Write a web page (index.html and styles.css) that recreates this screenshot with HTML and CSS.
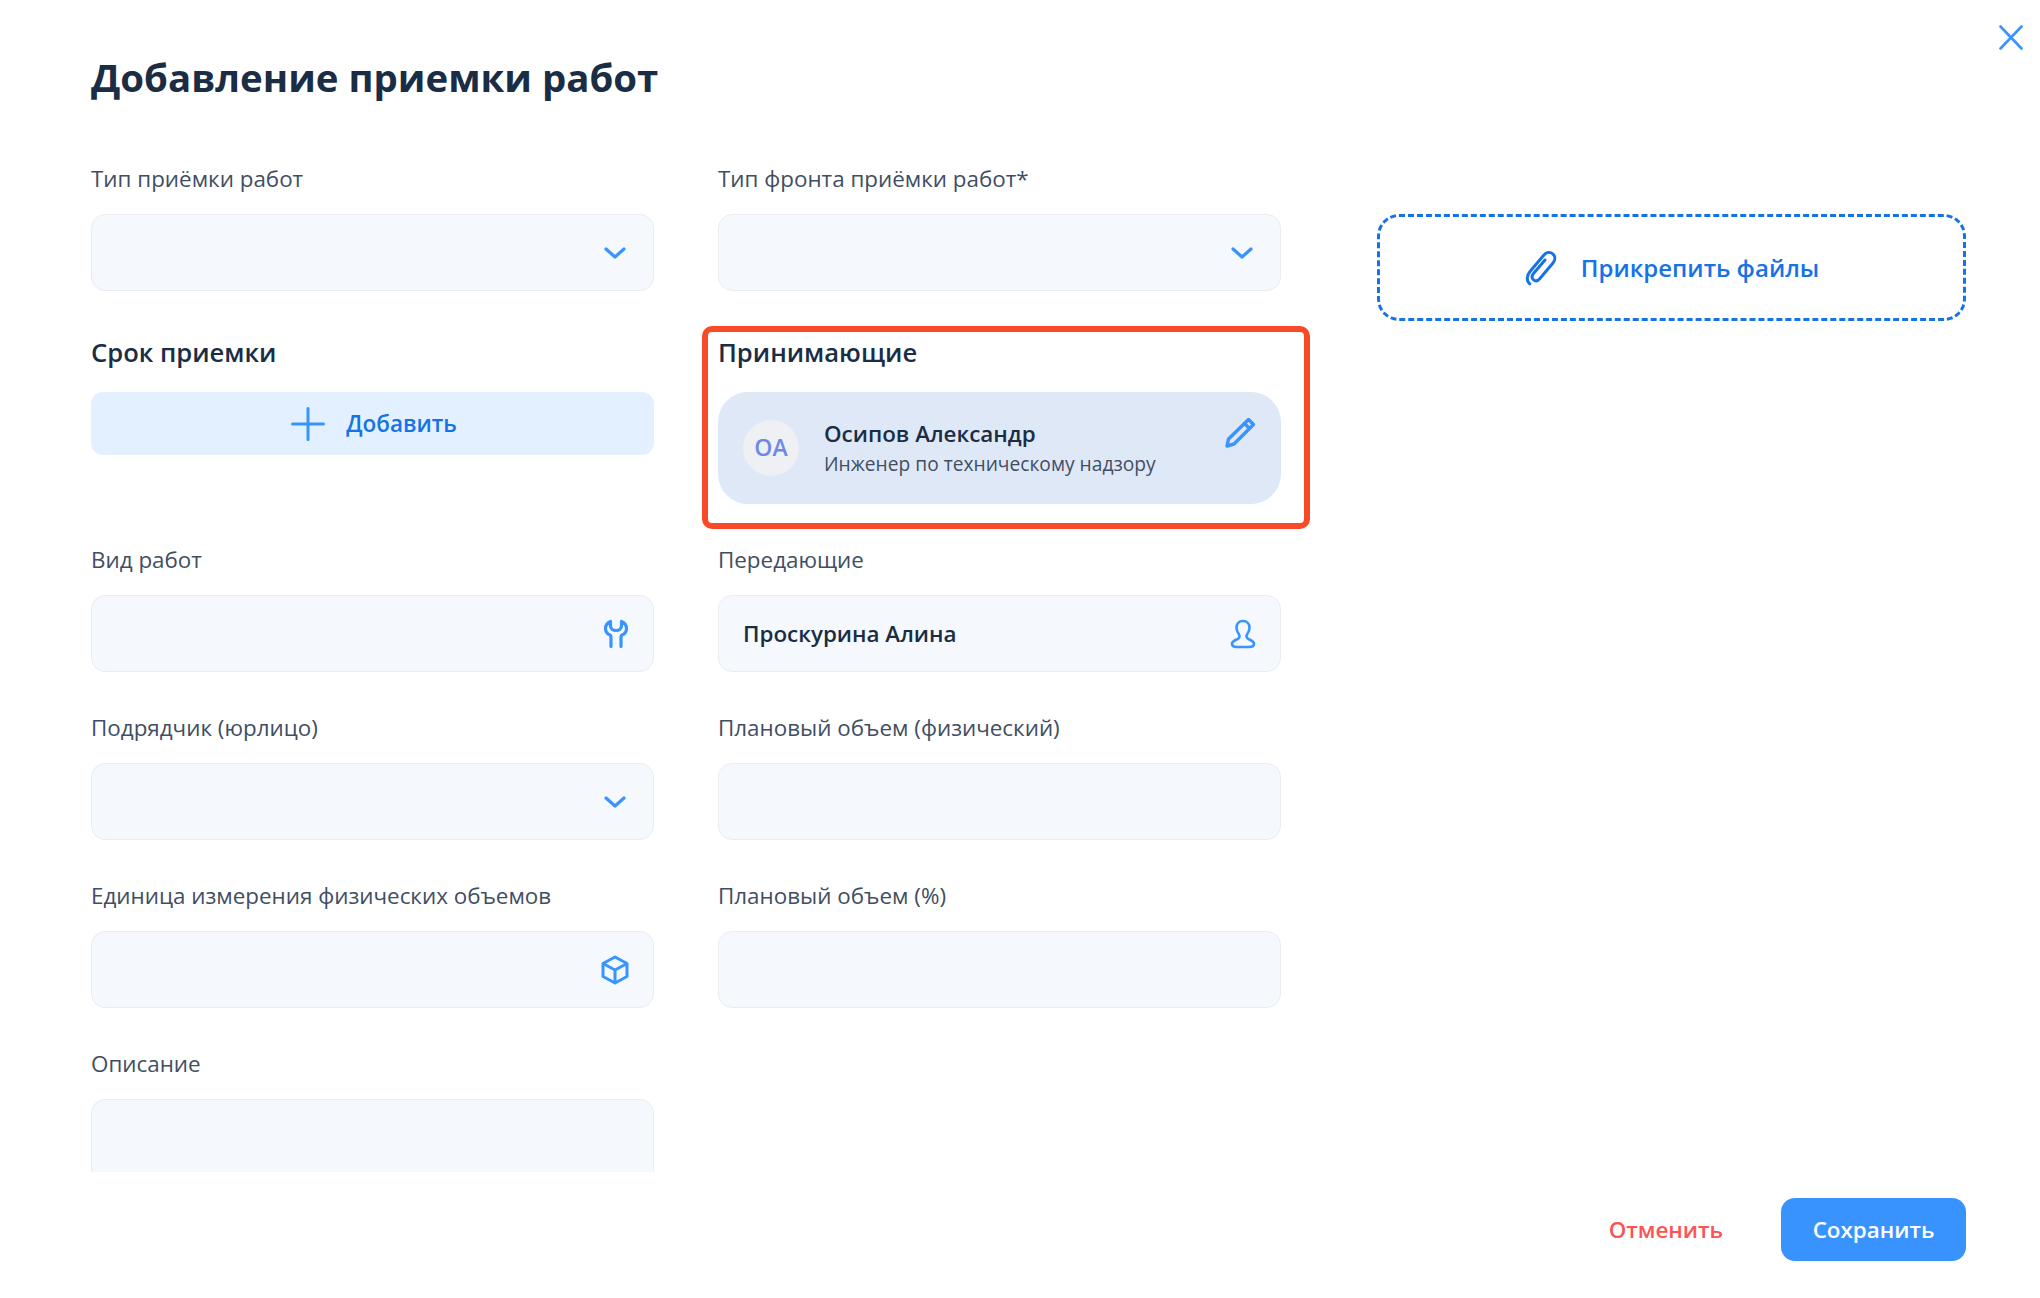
FILE: index.html
```html
<!DOCTYPE html>
<html lang="ru">
<head>
    <meta charset="UTF-8">
    <title>Добавление приемки работ</title>
    <link rel="stylesheet" href="styles.css">
</head>
<body>
    <div class="modal">
        <button class="close-btn" aria-label="Закрыть">
            <svg width="24" height="25" viewBox="0 0 24 25"><path d="M1.5 1.5 22.5 23.5M22.5 1.5 1.5 23.5" fill="none" stroke="#3894ff" stroke-width="2.6" stroke-linecap="round"/></svg>
        </button>

        <h1 class="modal-title">Добавление приемки работ</h1>

        <div class="form-scroll">
            <form class="form-grid">
                <div class="field-group">
                    <label class="field-label">Тип приёмки работ</label>
                    <div class="field">
                        <svg class="field-icon field-icon--chevron" width="22" height="12" viewBox="0 0 22 12"><path d="M2 2 11 10 20 2" class="icon-line"/></svg>
                    </div>
                </div>
                <div class="field-group">
                    <label class="field-label">Тип фронта приёмки работ*</label>
                    <div class="field">
                        <svg class="field-icon field-icon--chevron" width="22" height="12" viewBox="0 0 22 12"><path d="M2 2 11 10 20 2" class="icon-line"/></svg>
                    </div>
                </div>
                <div class="attach-col">
                    <a href="#" class="attach-btn">
                        <svg width="34" height="38" viewBox="0 0 34 38"><path d="M21 11 9.500 24.500c-2 2.500-1.600 5 .1 6.400 1.800 1.400 4.200 1 6.100-1.200L29 14c2.600-3.200 2.300-7-.3-9.200-2.700-2.200-6.300-1.700-9 1.400L6 22.500c-3.800 4.500-3.500 9.500-.2 12.300" fill="none" stroke="#1673e6" stroke-width="3" stroke-linecap="round"/></svg>
                        Прикрепить файлы
                    </a>
                </div>

                <div class="field-group">
                    <h2 class="section-label">Срок приемки</h2>
                    <a href="#" class="add-btn">
                        <svg width="34" height="34" viewBox="0 0 34 34"><path d="M17 1.500v31M1.500 17h31" fill="none" stroke="#3894ff" stroke-width="3" stroke-linecap="round"/></svg>
                        Добавить
                    </a>
                </div>
                <div class="field-group receivers">
                    <h2 class="section-label">Принимающие</h2>
                    <div class="person-card">
                        <div class="avatar">ОА</div>
                        <div class="person-info">
                            <div class="person-name">Осипов Александр</div>
                            <div class="person-role">Инженер по техническому надзору</div>
                        </div>
                        <svg class="person-edit" width="32" height="32" viewBox="0 0 32 32"><path d="M24.500 2.500 29.500 7.500 10 27 3 29 4.500 22ZM20.500 6.500 25.500 11.500" fill="none" stroke="#3894ff" stroke-width="3.400" stroke-linejoin="round"/></svg>
                    </div>
                    <div class="highlight"></div>
                </div>
                <div class="spacer"></div>

                <div class="field-group">
                    <label class="field-label">Вид работ</label>
                    <div class="field">
                        <svg class="field-icon" width="26" height="30" viewBox="0 0 26 30"><path d="M7.500 2.500C4.200 4 2.500 6.500 2.500 9.500c0 3 2 5.500 4.500 6.500.8.400 1 1 1 2v9.500M18.500 2.500c3.300 1.500 5 4 5 7s-2 5.500-4.500 6.500c-.8.400-1 1-1 2v9.500M7.500 2.500V7c0 2.500 2.500 4.500 5.500 4.500s5.500-2 5.500-4.500V2.500" class="icon-line"/></svg>
                    </div>
                </div>
                <div class="field-group">
                    <label class="field-label">Передающие</label>
                    <div class="field">
                        <span class="field-value">Проскурина Алина</span>
                        <svg class="field-icon" width="26" height="30" viewBox="0 0 26 30"><path d="M13 2c-4 0-6.500 3-6.500 6.800 0 3 1.300 5 2.500 6.700 1 1.500.6 3.200-1.200 4.300-2.500 1.500-5.800 2.400-5.800 5 0 2.200 2 3.200 5 3.200h12c3 0 5-1 5-3.200 0-2.600-3.300-3.500-5.800-5-1.800-1.100-2.200-2.800-1.200-4.300 1.200-1.700 2.500-3.700 2.500-6.700C19.500 5 17 2 13 2Z" fill="none" stroke="#3894ff" stroke-width="2.600"/></svg>
                    </div>
                </div>
                <div class="spacer"></div>

                <div class="field-group">
                    <label class="field-label">Подрядчик (юрлицо)</label>
                    <div class="field">
                        <svg class="field-icon field-icon--chevron" width="22" height="12" viewBox="0 0 22 12"><path d="M2 2 11 10 20 2" class="icon-line"/></svg>
                    </div>
                </div>
                <div class="field-group">
                    <label class="field-label">Плановый объем (физический)</label>
                    <div class="field"></div>
                </div>
                <div class="spacer"></div>

                <div class="field-group">
                    <label class="field-label">Единица измерения физических объемов</label>
                    <div class="field">
                        <svg class="field-icon field-icon--box" width="30" height="30" viewBox="0 0 30 30"><path d="M15 2 27 8.500V21.500L15 28 3 21.500V8.500ZM3 8.500 15 15 27 8.500M15 15V28" fill="none" stroke="#3894ff" stroke-width="3" stroke-linejoin="round"/></svg>
                    </div>
                </div>
                <div class="field-group">
                    <label class="field-label">Плановый объем (%)</label>
                    <div class="field"></div>
                </div>
                <div class="spacer"></div>

                <div class="field-group">
                    <label class="field-label">Описание</label>
                    <div class="field field--area"></div>
                </div>
            </form>
        </div>

        <footer class="modal-footer">
            <a href="#" class="cancel-btn">Отменить</a>
            <a href="#" class="save-btn">Сохранить</a>
        </footer>
    </div>
</body>
</html>
```

FILE: styles.css
```css
:root {
    --blue: #3894ff;
    --blue-dark: #1673e6;
    --text-dark: #1a2d45;
    --text-label: #3f4e63;
    --field-bg: #f5f9fd;
    --field-border: #e9edf1;
}

* {
    margin: 0;
    padding: 0;
    box-sizing: border-box;
}

html, body {
    height: 100%;
}

body {
    font-family: "Open Sans", "Noto Sans", sans-serif;
    background-color: #fff;
    color: var(--text-dark);
    overflow: hidden;
}

a {
    text-decoration: none;
}

.modal {
    position: relative;
    height: 1298px;
    padding: 47px 74px 0 91px;
    display: flex;
    flex-direction: column;
}

.close-btn {
    position: absolute;
    top: 25px;
    right: 17px;
    display: flex;
    border: 0;
    background: none;
}

.modal-title {
    font-size: 38.4px;
    font-weight: 700;
    line-height: 60px;
    margin-bottom: 56px;
}

/* форма */
.form-scroll {
    height: 1009px;
    flex-shrink: 0;
    overflow: hidden;
}

.form-grid {
    display: grid;
    grid-template-columns: 563px 563px 621px;
    column-gap: 64px;
    align-items: start;
}

.attach-col {
    padding: 51px 0 0 32px;
}

.field-group {
    position: relative;
    display: flex;
    flex-direction: column;
    padding-bottom: 40px;
}

.field-label {
    font-size: 22.4px;
    line-height: 32px;
    color: var(--text-label);
    margin-bottom: 19px;
}

.section-label {
    font-size: 25.6px;
    font-weight: 600;
    line-height: 36px;
    margin-top: 4px;
    margin-bottom: 21px;
}

.field {
    height: 77px;
    display: flex;
    align-items: center;
    justify-content: space-between;
    padding: 0 24px;
    background-color: var(--field-bg);
    border: 1.5px solid var(--field-border);
    border-radius: 14px;
}

.field--area {
    height: 160px;
}

.field-value {
    font-size: 22.4px;
    font-weight: 600;
}

.field-icon {
    margin-left: auto;
    flex-shrink: 0;
}

.field-icon--chevron {
    margin-right: 3px;
}

.field-icon--box {
    margin-right: -1px;
}

.icon-line {
    fill: none;
    stroke: var(--blue);
    stroke-width: 3.2px;
    stroke-linecap: round;
    stroke-linejoin: round;
}

.add-btn {
    height: 63px;
    display: flex;
    align-items: center;
    justify-content: center;
    gap: 21px;
    padding-left: 3px;
    font-size: 22.5px;
    font-weight: 600;
    color: var(--blue-dark);
    background-color: #e3f0ff;
    border-radius: 12px;
}

/* принимающие */
.person-card {
    height: 112px;
    display: flex;
    align-items: center;
    padding: 0 25px;
    background-color: #dfe8f7;
    border-radius: 30px;
}

.avatar {
    width: 56px;
    height: 56px;
    padding-bottom: 2px;
    border-radius: 50%;
    flex-shrink: 0;
    display: flex;
    align-items: center;
    justify-content: center;
    font-size: 23px;
    font-weight: 600;
    color: #6b8ae6;
    background-color: #eef0f4;
}

.person-info {
    margin-left: 25px;
    padding-bottom: 1px;
    flex-grow: 1;
}

.person-name {
    font-size: 22.4px;
    font-weight: 600;
    line-height: 32px;
}

.person-role {
    font-size: 19.2px;
    line-height: 27px;
    color: var(--text-label);
}

.person-edit {
    align-self: flex-start;
    margin-top: 25px;
}

.highlight {
    position: absolute;
    top: -5px;
    left: -16px;
    right: -29px;
    bottom: 15px;
    border: 6px solid #f94a27;
    border-radius: 10px;
}

/* файлы */
.attach-btn {
    height: 107px;
    display: flex;
    align-items: center;
    justify-content: center;
    gap: 23px;
    font-size: 24px;
    font-weight: 600;
    color: var(--blue-dark);
    border: 3px dashed var(--blue-dark);
    border-radius: 22px;
}

/* футер */
.modal-footer {
    display: flex;
    align-items: center;
    justify-content: flex-end;
    margin-top: 26px;
    gap: 58px;
}

.cancel-btn {
    font-size: 22.4px;
    font-weight: 600;
    color: #ff5252;
}

.save-btn {
    width: 185px;
    height: 63px;
    display: flex;
    align-items: center;
    justify-content: center;
    font-size: 22.4px;
    font-weight: 600;
    color: #fff;
    background-color: #3993ff;
    border-radius: 14px;
}
```
